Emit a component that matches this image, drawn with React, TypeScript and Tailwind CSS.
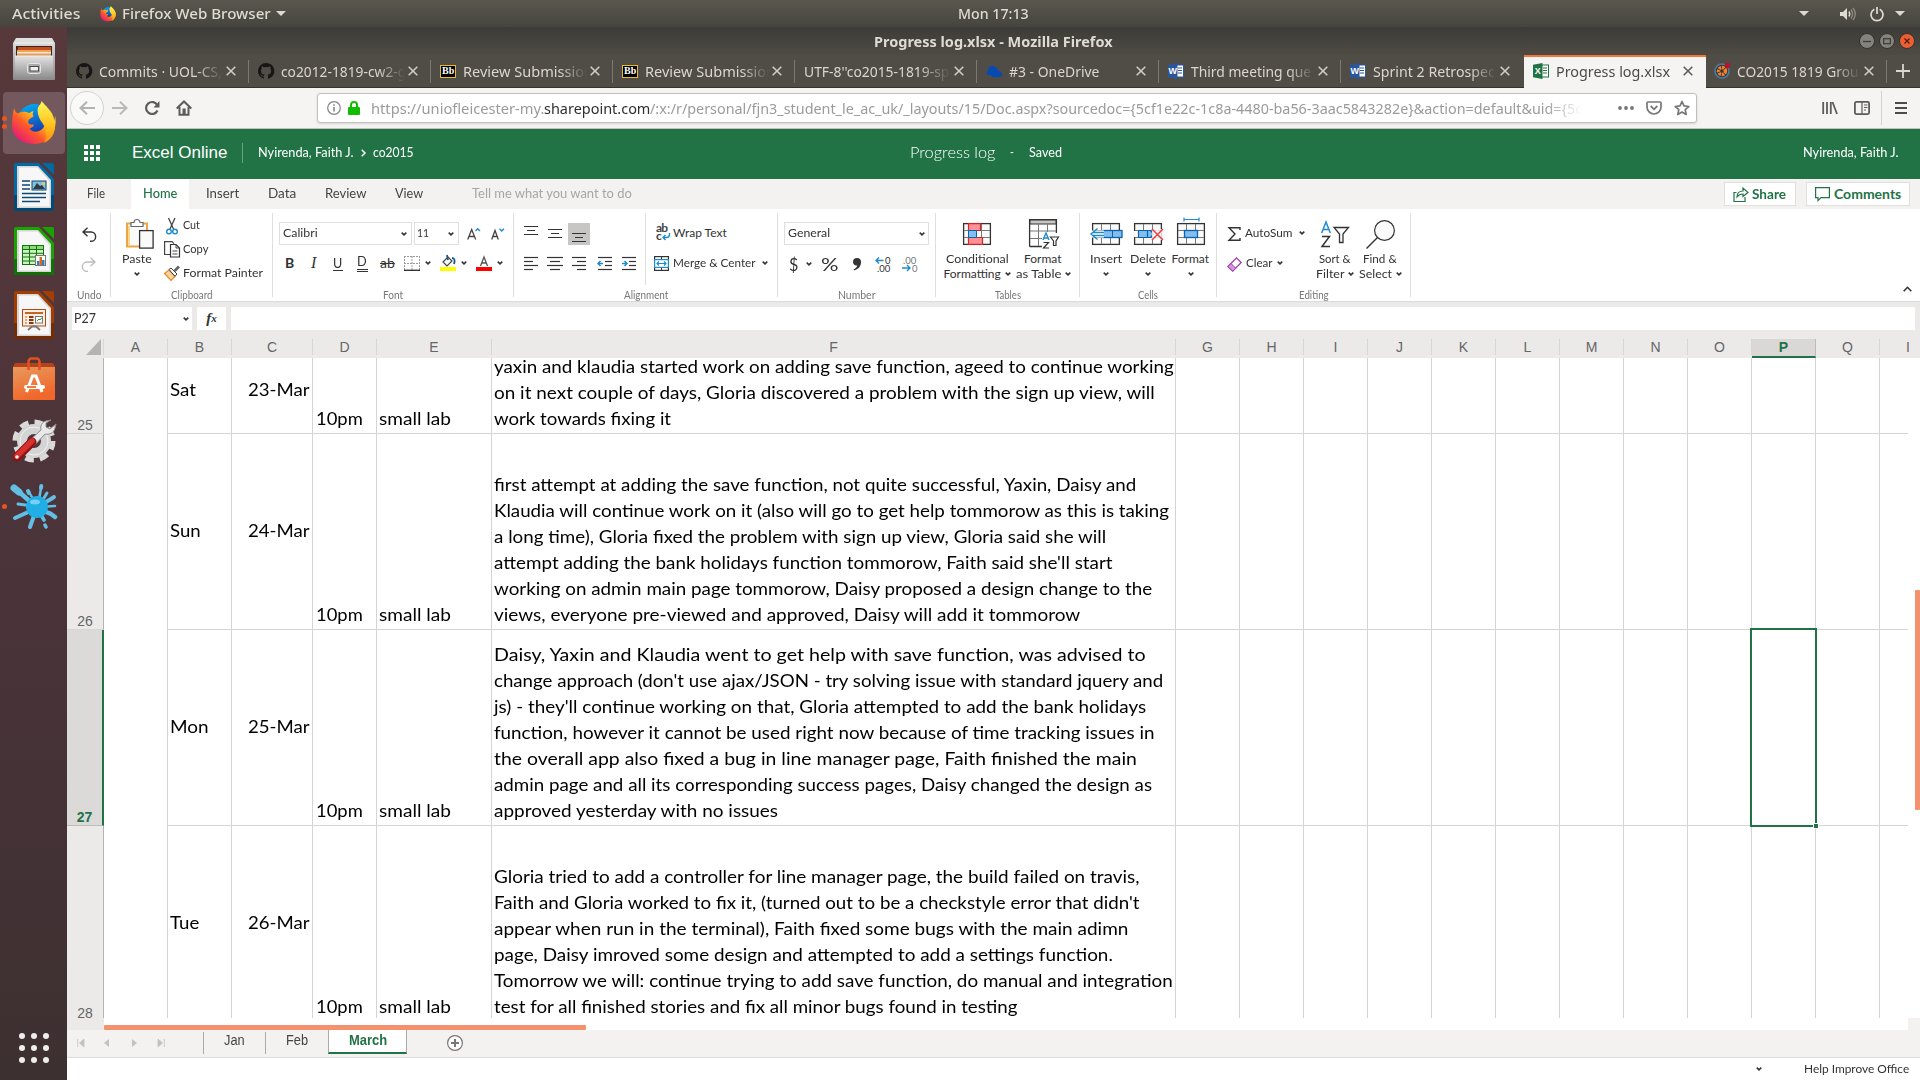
import React, { useLayoutEffect, useRef, useState } from "react";
import clsx from "clsx";

/* Text that is condensed or expanded to the width of its box. */
function T({ children, className }: { children: React.ReactNode; className?: string }) {
  const box = useRef<HTMLSpanElement>(null);
  const inner = useRef<HTMLSpanElement>(null);
  const [scale, setScale] = useState(1);
  useLayoutEffect(() => {
    const fit = () => {
      if (!box.current || !inner.current) return;
      const natural = inner.current.offsetWidth;
      if (natural > 0) setScale(box.current.offsetWidth / natural);
    };
    fit();
    document.fonts?.ready.then(fit);
  }, []);
  return (
    <span ref={box} className={clsx("inline-block shrink-0 whitespace-nowrap", className)}>
      <span ref={inner} className="inline-block origin-left" style={{ transform: `scaleX(${scale})` }}>
        {children}
      </span>
    </span>
  );
}

function Svg({ w, h, className, children }: { w: number; h: number; className?: string; children: React.ReactNode }) {
  return (
    <svg width={w} height={h} viewBox={`0 0 ${w} ${h}`} fill="none" className={clsx("shrink-0 overflow-visible", className)}>
      {children}
    </svg>
  );
}

const Caret = ({ className }: { className?: string }) => (
  <Svg w={6} h={4} className={className}>
    <path d="M.7 .6 3 2.9 5.3 .6" stroke="#333" strokeWidth="1.5" />
  </Svg>
);

/* ---------- desktop ---------- */

const FirefoxIcon = ({ size }: { size: number }) => (
  <svg width={size} height={size} viewBox="0 0 44 44" className="shrink-0">
    <defs>
      <linearGradient id="fxa" x1="0.9" y1="0.1" x2="0.1" y2="0.9">
        <stop offset="0" stopColor="#fff44f" />
        <stop offset=".35" stopColor="#ffb11b" />
        <stop offset=".6" stopColor="#ff5a2a" />
        <stop offset="1" stopColor="#e5137f" />
      </linearGradient>
      <linearGradient id="fxb" x1="0" y1="0" x2="0.3" y2="1">
        <stop offset="0" stopColor="#00b4f5" />
        <stop offset="1" stopColor="#1a2fa8" />
      </linearGradient>
      <linearGradient id="fxc" x1="0" y1="0" x2="0" y2="1">
        <stop offset="0" stopColor="#fff75a" />
        <stop offset=".6" stopColor="#ffbf1a" />
        <stop offset="1" stopColor="#ff8a16" />
      </linearGradient>
    </defs>
    <circle cx="23" cy="20" r="17" fill="url(#fxb)" />
    <path d="M3 7c1 2 1 4 4 5 4-2 8-2 11 0 2-2 3-2 4-2-1 2-1 4 0 5-2 2-6 3-5 6 0 2 3 2 5 2 1 2-2 3-4 4 2 3 6 4 10 2 5-2 7-8 4-14 5 1 8 5 9 8 2-4 2-7 2-9 3 16-6 28-20 28C8 42 0 33 1 22c0-6 1-11 2-15Z" fill="url(#fxa)" />
    <path d="M30 0c2 3 7 7 10 12 6 12 3 25-8 29 4-5 3-13-1-19-3-4-5-8-5-13 0-4 3-5 4-9Z" fill="url(#fxc)" />
  </svg>
);

const FilesIcon = () => (
  <Svg w={42} h={42}>
    <defs>
      <linearGradient id="fil" x1="0" y1="0" x2="0" y2="1">
        <stop offset="0" stopColor="#e3e3e3" />
        <stop offset="1" stopColor="#8b8b8b" />
      </linearGradient>
    </defs>
    <path d="M3 0h36l3 5v36a1 1 0 0 1-1 1H1a1 1 0 0 1-1-1V5Z" fill="url(#fil)" />
    <path d="M2 5h38" stroke="#f4f4f4" />
    <path d="M3 8h36v10H3Z" fill="#302722" />
    <path d="M5 9h33v9H4Z" fill="#cb4c1b" />
    <path d="M4 12h34v2H4Z" fill="#eca35a" />
    <path d="M4 14h34v4H4Z" fill="#f8ead6" />
    <path d="M4 15.500h34v2.500H4Z" fill="#e79b58" />
    <path d="M2 18h38v23H2Z" fill="url(#fil)" />
    <path d="M2 18h38" stroke="#eee" />
    <rect x="14.500" y="25.500" width="13" height="10" rx="2" fill="#aaa" stroke="#e5e5e5" />
    <rect x="17" y="28.500" width="8.500" height="4.500" fill="#efefef" stroke="#4a4a4a" />
  </Svg>
);

const DocIcon = ({ main, dark, kind }: { main: string; dark: string; kind: "w" | "c" | "i" }) => (
  <Svg w={40} h={48}>
    <path d="M2 0h23l15 16v30a2 2 0 0 1-2 2H2a2 2 0 0 1-2-2V2a2 2 0 0 1 2-2Z" fill={main} />
    <path d="M0 32h40v14a2 2 0 0 1-2 2H2a2 2 0 0 1-2-2Z" fill={dark} opacity=".7" />
    <path d="M28 0h10a2 2 0 0 1 2 2v10Z" fill={main} />
    <path d="M3 3h21l13 14v28H3Z" fill="#d5d5d5" />
    <path d="M5 4.500h18.500L35.500 18v25.500H5Z" fill="#f7f7f7" />
    {kind === "w" && (
      <>
        <path d="M8 18h8M8 22h8M8 26h8M8 30.500h24M8 34.500h24M8 38.500h18" stroke="#0d4a73" strokeWidth="1.700" />
        <rect x="18" y="18" width="14" height="9" fill="#83c0e2" stroke="#0d4a73" />
        <path d="m19 26 4-6 3 3 2-1 3 4Z" fill="#303b42" />
        <circle cx="29.500" cy="20.500" r="1.500" fill="#f6c951" />
      </>
    )}
    {kind === "c" && (
      <>
        <rect x="8.500" y="18.500" width="21" height="19" fill="#ccf4c2" stroke="#12740b" />
        <path d="M9 19h20v3H9Z" fill="#8bdb78" />
        <path d="M8 22.500h22M8 26.300h22M8 30h22M8 34h22M15.500 18v20M22.500 18v20" stroke="#12740b" />
        <rect x="21.500" y="28.500" width="10" height="10" fill="#fff" stroke="#777" />
        <path d="M23 34h2.500v4H23Z" fill="#2c7fc4" />
        <path d="M25.500 30H28v8h-2.500Z" fill="#e3641c" />
        <path d="M28 33h2.500v5H28Z" fill="#2c7fc4" />
      </>
    )}
    {kind === "i" && (
      <>
        <rect x="8.500" y="18.500" width="23" height="16.500" fill="#fdeee5" stroke="#b04b12" />
        <path d="M11 22h18" stroke="#c9641f" strokeWidth="2" />
        <path d="M11 26h2M11 29h2M11 32h2" stroke="#e2a87e" strokeWidth="2" />
        <path d="M15 26h4.500M15 29h4.500M15 32h4.500" stroke="#8c350a" strokeWidth="2" />
        <rect x="21.500" y="25.500" width="7" height="6.500" fill="#fff" stroke="#777" />
        <path d="m23 30 2-2 1 1 2-2.500" stroke="#28a428" />
        <path d="m14 39 4-3.500h4l4 3.500" stroke="#777" strokeWidth="1.800" />
      </>
    )}
  </Svg>
);

const SoftwareIcon = () => (
  <Svg w={42} h={43}>
    <defs>
      <linearGradient id="sw" x1="0" y1="0" x2=".4" y2="1">
        <stop offset="0" stopColor="#e89a5e" />
        <stop offset="1" stopColor="#f1662a" />
      </linearGradient>
    </defs>
    <path d="M0 10 2 6h38l2 4Z" fill="#b4421b" />
    <path d="M0 10h42v32a1 1 0 0 1-1 1H1a1 1 0 0 1-1-1Z" fill="url(#sw)" />
    <path d="M15.500 13V4.500a3 3 0 0 1 3-3h5a3 3 0 0 1 3 3V13" stroke="#e0521f" strokeWidth="2.500" />
    <path d="m13.500 35 6-16h3.500l6 16" stroke="#fff" strokeWidth="3" />
    <path d="M13 30h17" stroke="#fff" strokeWidth="4" strokeLinecap="round" />
    <path d="M14 30h9" stroke="#ed6c2c" strokeWidth="1.800" />
  </Svg>
);

const SettingsIcon = () => (
  <Svg w={44} h={44}>
    <circle cx="22" cy="22" r="18.500" stroke="#dadada" strokeWidth="6" strokeDasharray="8.500 6.030" />
    <circle cx="22" cy="22" r="12" stroke="#d4d4d4" strokeWidth="10" />
    <circle cx="22" cy="22" r="14" stroke="#f1f1f1" strokeWidth="1" />
    <path d="M34 2c-4 1-6 5-5 9L17 22l5 5 11-12c4 1 9-1 10-6l1-4-6 5-4-2v-4l5-3Z" fill="#e9e9e9" stroke="#8c8c8c" />
    <path d="M5 38 20 23" stroke="#8f1414" strokeWidth="9" strokeLinecap="round" />
    <path d="M5 37 20 22" stroke="#d5322f" strokeWidth="5.500" strokeLinecap="round" />
    <circle cx="5" cy="38" r="1.800" fill="#eee" />
  </Svg>
);

const SplatIcon = () => (
  <Svg w={46} h={46}>
    <g stroke="#62bfe3" strokeLinecap="round">
      <path d="M8 8 3 4" strokeWidth="7" />
      <path d="M24 22 6 6" strokeWidth="4.500" />
      <path d="M26 22 18 8" strokeWidth="2.500" />
      <path d="m18 9-1-2" strokeWidth="4" />
      <path d="M27 22 30 4" strokeWidth="2.500" />
      <path d="m30 4 .3-2" strokeWidth="4" />
      <path d="m28 22 8-13" strokeWidth="3" />
      <path d="m28 22 12-7M40 15l3-2" strokeWidth="4" />
      <path d="m28 23 16-1" strokeWidth="2.500" />
      <path d="m28 25 12 5M40 30l4 3" strokeWidth="4.500" />
      <path d="m27 26 6 10M34 41l1 2" strokeWidth="3.500" />
      <path d="M25 26 19 43" strokeWidth="4" />
      <path d="M24 25 4 34" strokeWidth="4" />
      <path d="M22 22 7 20" strokeWidth="3" />
    </g>
    <circle cx="26" cy="23" r="11" fill="#21aee6" />
    <ellipse cx="24" cy="18" rx="5" ry="2.500" fill="#9be0f8" opacity=".7" />
  </Svg>
);

function Dock() {
  return (
    <aside className="relative flex h-[1053px] w-[67px] shrink-0 flex-col items-center bg-linear-to-b from-[#57383b] via-[#4b343a] to-[#3d3031]">
      <div className="mt-[10px] flex h-[43px] items-center"><FilesIcon /></div>
      <div className="mt-[12px] flex h-[62px] w-[62px] items-center justify-center rounded-[4px] bg-[#73595d]">
        <FirefoxIcon size={45} />
      </div>
      <div className="mt-[9px] flex h-[48px]"><DocIcon main="#0369a3" dark="#063c60" kind="w" /></div>
      <div className="mt-[16px] flex h-[48px]"><DocIcon main="#18a303" dark="#0c5c0a" kind="c" /></div>
      <div className="mt-[16px] flex h-[48px]"><DocIcon main="#a33e03" dark="#5c2606" kind="i" /></div>
      <div className="mt-[18px] flex h-[43px]"><SoftwareIcon /></div>
      <div className="mt-[19px] flex h-[44px]"><SettingsIcon /></div>
      <div className="mt-[21px] flex h-[46px]"><SplatIcon /></div>
      <div className="mt-auto mb-[17px] grid grid-cols-3 gap-[6px]">
        {Array.from({ length: 9 }, (_, i) => (
          <i key={i} className="size-[6px] rounded-full bg-[#eeeeec]" />
        ))}
      </div>
      <i className="absolute top-[89px] left-[2px] size-[5px] rounded-full bg-[#e95420]" />
      <i className="absolute top-[97px] left-[2px] size-[5px] rounded-full bg-[#e95420]" />
      <i className="absolute top-[477px] left-[2px] size-[5px] rounded-full bg-[#e95420]" />
    </aside>
  );
}

const Down = ({ className }: { className?: string }) => (
  <Svg w={10} h={5} className={className}><path d="M0 0h10L5 5Z" fill="#dbd9d4" /></Svg>
);

function TopBar() {
  return (
    <header className="flex h-[27px] items-center bg-linear-to-b from-[#5a574e] to-[#45443e] font-['Noto_Sans'] text-[14px] font-medium text-[#dfdbd2]">
      <T className="ml-[12px] w-[68px]">Activities</T>
      <span className="mr-[6px] ml-[20px]"><FirefoxIcon size={16} /></span>
      <T className="w-[149px]">Firefox Web Browser</T>
      <Down className="ml-[5px]" />
      <T className="ml-[672px] w-[71px]">Mon 17:13</T>
      <Down className="ml-[770px]" />
      <Svg w={16} h={14} className="ml-[31px]">
        <path d="M0 5h3l4-4v12L3 9H0Z" fill="#dfdbd2" />
        <path d="M9 4.500q1.500 2.500 0 5" stroke="#dfdbd2" strokeWidth="1.500" />
        <path d="M11 2.500q3 4.500 0 9M13 1q4.500 6 0 12" stroke="#8b8880" strokeWidth="1.400" />
      </Svg>
      <Svg w={14} h={14} className="ml-[14px]">
        <path d="M4.300 2.300a6 6 0 1 0 5.400 0M7 0v7" stroke="#dfdbd2" strokeWidth="1.700" />
      </Svg>
      <Down className="ml-[11px]" />
    </header>
  );
}

/* ---------- browser ---------- */

const GitHubIcon = () => (
  <Svg w={16} h={16}>
    <path fill="#171515" d="M8 0a8 8 0 0 0-2.530 15.590c.4.070.55-.17.55-.38v-1.490c-2.010.44-2.690-.85-2.690-.85-.36-.94-.88-1.190-.88-1.190-.73-.5.050-.49.050-.49.810.060 1.230.83 1.230.83.720 1.240 1.890.88 2.350.67.070-.52.280-.88.510-1.080-1.780-.2-3.640-.89-3.640-3.950 0-.87.310-1.590.82-2.150-.08-.2-.36-1.020.08-2.120 0 0 .67-.21 2.200.82a7.600 7.600 0 0 1 4 0c1.530-1.040 2.200-.82 2.200-.82.440 1.100.160 1.920.080 2.120.510.560.820 1.270.820 2.150 0 3.070-1.870 3.750-3.650 3.950.290.250.540.730.540 1.480v2.200c0 .210.150.460.550.380A8 8 0 0 0 8 0Z" />
  </Svg>
);
const BbIcon = () => (
  <span className="flex h-[13px] w-[16px] shrink-0 items-center justify-center border border-[#e8b92c] bg-black font-['Liberation_Serif'] text-[10px] font-bold leading-none text-white">
    <T className="w-[12px]">Bb</T>
  </span>
);
const OneDriveIcon = () => (
  <Svg w={17} h={12}>
    <path d="M5 10H2a2.500 2.500 0 0 1 0-4.500A4.500 4.500 0 0 1 10 2.500a3 3 0 0 1 2 .5L7 6Z" fill="#094ab2" />
    <path d="M6.500 12a2.700 2.700 0 0 1 0-5 3.700 3.700 0 0 1 7-.5A2.800 2.800 0 0 1 14 12Z" fill="#094ab2" />
  </Svg>
);
const OfficeIcon = ({ color, letter }: { color: string; letter: string }) => (
  <Svg w={16} h={16}>
    <rect x="8" y="2" width="7.500" height="12" fill="#fff" stroke={color} />
    <path d="M10 5h4M10 7.500h4M10 10h4" stroke={color} strokeWidth="1.200" />
    <path d="M0 1.800 9.500 0v16L0 14.200Z" fill={color} />
    <text x="4.800" y="11.300" textAnchor="middle" fontSize="9" fontWeight="700" fill="#fff" fontFamily="Liberation Sans">{letter}</text>
  </Svg>
);
const CourseIcon = () => (
  <Svg w={16} h={16}>
    <circle cx="8" cy="8" r="7" fill="#3b3535" stroke="#4a7da3" strokeWidth="1.600" />
    <circle cx="8" cy="8" r="3.500" stroke="#ef8132" strokeWidth="3.500" strokeDasharray="2.400 .8" />
    <circle cx="13.500" cy="2.500" r="2.700" fill="#b8142b" />
  </Svg>
);

const tabs = [
  { icon: <GitHubIcon />, title: "Commits · UOL-CS,", w: "w-[123px]" },
  { icon: <GitHubIcon />, title: "co2012-1819-cw2-g", w: "w-[125px]" },
  { icon: <BbIcon />, title: "Review Submission", w: "w-[130px]" },
  { icon: <BbIcon />, title: "Review Submission", w: "w-[130px]" },
  { icon: null, title: "UTF-8''co2015-1819-sp", w: "w-[145px]" },
  { icon: <OneDriveIcon />, title: "#3 - OneDrive", w: "w-[90px]" },
  { icon: <OfficeIcon color="#2b579a" letter="W" />, title: "Third meeting que", w: "w-[120px]" },
  { icon: <OfficeIcon color="#2b579a" letter="W" />, title: "Sprint 2 Retrospec", w: "w-[122px]" },
  { icon: <OfficeIcon color="#217346" letter="X" />, title: "Progress log.xlsx", w: "w-[114px]", active: true },
  { icon: <CourseIcon />, title: "CO2015 1819 Grou", w: "w-[122px]" },
];

function BrowserChrome() {
  return (
    <div className="font-['Noto_Sans']">
      <div className="flex h-[28px] items-center bg-linear-to-b from-[#3c3b37] to-[#4e4b44] text-[14px] font-bold text-[#dfdbd2]">
        <T className="ml-[807px] w-[239px]">Progress log.xlsx - Mozilla Firefox</T>
        <div className="mr-[5px] ml-auto flex gap-[4px]">
          <Svg w={16} h={16}><circle cx="8" cy="8" r="7.500" fill="#85827b" stroke="#33322f" /><path d="M4 8.500h8" stroke="#3c3b37" strokeWidth="1.300" /></Svg>
          <Svg w={16} h={16}><circle cx="8" cy="8" r="7.500" fill="#85827b" stroke="#33322f" /><rect x="4.700" y="5.700" width="6.600" height="5" stroke="#3c3b37" strokeWidth="1.200" /></Svg>
          <Svg w={16} h={16}><circle cx="8" cy="8" r="7.500" fill="#ee5e33" stroke="#33322f" /><path d="m5.500 5.500 5 5m0-5-5 5" stroke="#4a2013" strokeWidth="1.300" /></Svg>
        </div>
      </div>
      <div className="flex h-[33px] items-stretch border-b border-[#33322e] bg-[#504d46] text-[15px]">
        {tabs.map((t, i) => (
          <div
            key={i}
            className={clsx(
              "flex w-[182px] shrink-0 items-center pl-[9px]",
              t.active ? "mb-[-1px] translate-x-px border-t-2 border-[#f4743b] bg-[#f5f4f2] pb-[3px] text-[#4a4a48]" : "text-[#dbd7ce]",
            )}
          >
            {t.icon && <span className="mr-[7px] flex w-[16px] shrink-0">{t.icon}</span>}
            <span className={clsx("flex min-w-0 flex-1 overflow-hidden", !t.active && t.w !== "w-[90px]" && "[mask-image:linear-gradient(to_right,#000_78%,transparent)]")}>
              <T className={t.w}>{t.title}</T>
            </span>
            <Svg w={10} h={10} className="mr-[12px] ml-[3px]">
              <path d="m.7 .7 8.600 8.600m0-8.600L.7 9.300" stroke={t.active ? "#5c5c5a" : "#d0ccc3"} strokeWidth="1.600" />
            </Svg>
            <i className={clsx("h-[23px] w-px", t.active || i === 7 ? "" : "bg-[#7b7972]")} />
          </div>
        ))}
        <Svg w={14} h={14} className="ml-[9px] self-center"><path d="M7 0v14M0 7h14" stroke="#dbd7ce" strokeWidth="1.800" /></Svg>
      </div>
      <div className="flex h-[41px] items-center border-b border-[#c6c3bf] bg-[#f5f4f2]">
        <span className="ml-[3px] flex size-[34px] items-center justify-center rounded-full border border-[#d4d2cf] bg-[#f9f9f8]">
          <Svg w={16} h={14}><path d="M16 7H1.500M8 .8 1.500 7 8 13.200" stroke="#b5b3b0" strokeWidth="2" /></Svg>
        </span>
        <Svg w={16} h={14} className="ml-[8px]"><path d="M0 7h14.500M8 .8 14.500 7 8 13.200" stroke="#bbb9b6" strokeWidth="2" /></Svg>
        <Svg w={15} h={14} className="ml-[17px]">
          <path d="M12.500 9.500a6 6 0 1 1 0-5" stroke="#5c5c5a" strokeWidth="2.200" />
          <path d="M14.500 0v6.500H8.500Z" fill="#5c5c5a" />
        </Svg>
        <Svg w={16} h={16} className="ml-[16px]">
          <path d="M.7 8.500 8 1.500l7.300 7M3.500 7v7.700h9V7" stroke="#5c5c5a" strokeWidth="2" />
          <path d="M6.500 8.500h3.200V15H6.500Z" fill="#5c5c5a" />
        </Svg>
        <div className="ml-[125px] flex h-[30px] w-[1380px] items-center rounded-[3px] border border-[#c2c0bd] bg-white text-[15px] text-[#9b9b9b] shadow-sm">
          <Svg w={14} h={14} className="ml-[9px]">
            <circle cx="7" cy="7" r="6.300" stroke="#858585" strokeWidth="1.200" />
            <path d="M7 6v4.500M7 3.300v1.500" stroke="#858585" strokeWidth="1.600" />
          </Svg>
          <Svg w={12} h={14} className="ml-[7px]">
            <path d="M3 7V4a3 3 0 0 1 6 0v3" stroke="#12bc00" strokeWidth="2" />
            <rect y="6" width="12" height="8" rx="1" fill="#12bc00" />
          </Svg>
          <span className="ml-[11px] flex w-[1211px] overflow-hidden [mask-image:linear-gradient(to_right,#000_97%,transparent)]">
            <T className="w-[173px]">https://uniofleicester-my.</T>
            <T className="w-[106px] text-[#2e2e2e]">sharepoint.com</T>
            <T className="w-[932px]">/:x:/r/personal/fjn3_student_le_ac_uk/_layouts/15/Doc.aspx?sourcedoc={"{"}5cf1e22c-1c8a-4480-ba56-3aac5843282e{"}"}&amp;action=default&amp;uid={"{"}5c</T>
          </span>
          <Svg w={16} h={4} className="ml-[36px]">
            <circle cx="2" cy="2" r="1.900" fill="#777" /><circle cx="8" cy="2" r="1.900" fill="#777" /><circle cx="14" cy="2" r="1.900" fill="#777" />
          </Svg>
          <Svg w={16} h={14} className="ml-[12px]">
            <path d="M2 1h12a1 1 0 0 1 1 1v4a7 7 0 0 1-14 0V2a1 1 0 0 1 1-1Z" stroke="#777" strokeWidth="1.700" />
            <path d="m4.700 5 3.300 3.300L11.300 5" stroke="#777" strokeWidth="1.800" />
          </Svg>
          <Svg w={16} h={16} className="ml-[12px]">
            <path d="m8 1.500 2 4.400 4.800.6-3.600 3.200 1 4.800L8 12.100l-4.200 2.400 1-4.800L1.200 6.500l4.800-.6Z" stroke="#777" strokeWidth="1.700" strokeLinejoin="round" />
          </Svg>
        </div>
        <Svg w={16} h={14} className="ml-[125px]"><path d="M1.200 1v12M5 1v12M8.800 1v12M10.500 1 15 13" stroke="#5c5c5a" strokeWidth="1.800" /></Svg>
        <Svg w={16} h={14} className="ml-[16px]">
          <rect x=".9" y=".9" width="14.200" height="12.200" rx="1.500" stroke="#5c5c5a" strokeWidth="1.800" />
          <path d="M8 1v12M10 4h3.500M10 6.500h3.500M10 9h2" stroke="#5c5c5a" strokeWidth="1.200" />
        </Svg>
        <i className="ml-[11px] h-[34px] w-px bg-[#d5d3d0]" />
        <Svg w={12} h={12} className="ml-[13px]"><path d="M0 1h12M0 6h12M0 11h12" stroke="#4c4c4a" strokeWidth="2" /></Svg>
      </div>
    </div>
  );
}

/* ---------- Excel ---------- */

function SuiteHeader() {
  return (
    <div className="flex h-[50px] items-center bg-[#217346] pb-[2px] font-['Lato'] text-[13px] text-white">
      <span className="ml-[17px] grid grid-cols-3 gap-[2px]">
        {Array.from({ length: 9 }, (_, i) => <i key={i} className="size-[4px] bg-white" />)}
      </span>
      <T className="ml-[32px] w-[95px] font-['Liberation_Sans'] text-[17px]">Excel Online</T>
      <i className="ml-[15px] h-[20px] w-px bg-[#64a27d]" />
      <T className="ml-[15px] w-[96px]">Nyirenda, Faith J.</T>
      <Svg w={5} h={8} className="ml-[7px]"><path d="m.7 .7 3.300 3.300L.7 7.300" stroke="#fff" strokeWidth="1.500" /></Svg>
      <T className="ml-[7px] w-[41px]">co2015</T>
      <T className="ml-[496px] w-[85px] pb-[2px] text-[16px] font-light">Progress log</T>
      <T className="ml-[15px] w-[4px]">-</T>
      <T className="ml-[15px] w-[33px]">Saved</T>
      <T className="ml-[741px] w-[96px]">Nyirenda, Faith J.</T>
    </div>
  );
}

function RibbonTabs() {
  return (
    <div className="flex h-[30px] items-center bg-[#f3f2f1] font-['Lato'] text-[14px] text-[#444]">
      <T className="ml-[20px] w-[18px] pb-[3px]">File</T>
      <span className="ml-[26px] flex h-full w-[58px] items-center justify-center bg-white text-[#217346]"><T className="w-[34px] pb-[3px] font-medium">Home</T></span>
      <T className="ml-[17px] w-[33px] pb-[3px]">Insert</T>
      <T className="ml-[29px] w-[28px] pb-[3px]">Data</T>
      <T className="ml-[29px] w-[41px] pb-[3px]">Review</T>
      <T className="ml-[29px] w-[28px] pb-[3px]">View</T>
      <T className="ml-[49px] w-[160px] pb-[3px] text-[#a6a6a6]">Tell me what you want to do</T>
      <span className="ml-[1092px] flex h-[24px] w-[72px] items-center border border-[#e1dfdd] bg-white font-bold text-[#217346]">
        <Svg w={16} h={15} className="ml-[8px]">
          <path d="M3.500 5.500H1v9h11V10" stroke="#217346" strokeWidth="1.200" />
          <path d="M4 10c0-4 2.500-6 6-6V1l5 4.500L10 9.500V7c-3 0-4.500 1-6 3Z" stroke="#217346" strokeWidth="1.200" />
        </Svg>
        <T className="ml-[3px] w-[34px] pb-[2px]">Share</T>
      </span>
      <span className="ml-[10px] flex h-[24px] w-[104px] items-center border border-[#e1dfdd] bg-white font-bold text-[#217346]">
        <Svg w={15} h={14} className="ml-[8px]"><path d="M.6 .6h13.800v10H6l-3 3v-3H.6Z" stroke="#217346" strokeWidth="1.200" /></Svg>
        <T className="ml-[4px] w-[67px] pb-[2px]">Comments</T>
      </span>
    </div>
  );
}

function Group({ label, labelW, className, children }: { label: string; labelW: string; className: string; children: React.ReactNode }) {
  return (
    <div className={clsx("my-[4px] flex h-[84px] shrink-0 flex-col border-r border-[#e1dfdd]", className)}>
      <div className="flex h-[74px] min-h-0 shrink-0 items-start">{children}</div>
      <div className="flex h-[14px] shrink-0 items-center justify-center text-[11px] leading-none text-[#777]"><T className={labelW}>{label}</T></div>
    </div>
  );
}

/* A tall ribbon button: an icon over two lines of label. */
function Tall({ icon, a, aw, b, bw, className }: { icon: React.ReactNode; a: string; aw: string; b?: string; bw?: string; className: string }) {
  return (
    <div className={clsx("flex shrink-0 flex-col items-center", className)}>
      <span className="flex h-[38px] items-center pt-[4px]">{icon}</span>
      <span className="flex h-[15px] items-center"><T className={aw}>{a}</T></span>
      <span className="flex h-[15px] items-center">
        {b && <T className={clsx("mr-[4px]", bw)}>{b}</T>}
        <Caret />
      </span>
    </div>
  );
}

const Lines = ({ w, rows, d = "" }: { w: number; rows: [number, number][]; d?: string }) => (
  <Svg w={w} h={14}>
    {rows.map(([x, len], i) => (
      <path key={i} d={`M${x} ${i * 4 + 0.5}h${len}`} stroke="#333" strokeWidth="1.200" />
    ))}
    {d && <path d={d} stroke="#1e8bcd" strokeWidth="1.500" />}
  </Svg>
);

const GridBase = () => (
  <>
    <rect x=".6" y=".6" width="26.800" height="20.800" fill="#fafafa" stroke="#333" strokeWidth="1.300" />
    <path d="M1 7.500h26M1 14.500h26M9.500 1v20M18.500 1v20" stroke="#777" />
  </>
);

function Ribbon() {
  return (
    <div className="flex h-[93px] border-b border-[#dcdad8] bg-white font-['Lato'] text-[12px] text-[#333]">
      <Group label="Undo" labelW="w-[24px]" className="w-[44px]">
        <div className="ml-[15px] flex flex-col gap-[15px] pt-[14px]">
          <Svg w={14} h={15}><path d="M5.500 .7 1 5l4.500 4.300M1 5h8a4.500 4.500 0 0 1 0 9.300H8" stroke="#333" strokeWidth="1.400" /></Svg>
          <Svg w={14} h={15}><path d="M8.500 .7 13 5 8.500 9.300M13 5H5a4.500 4.500 0 0 0 0 9.300h1" stroke="#bbb" strokeWidth="1.300" /></Svg>
        </div>
      </Group>

      <Group label="Clipboard" labelW="w-[42px]" className="w-[162px]">
        <Tall
          className="ml-[9px] w-[33px]"
          a="Paste"
          aw="w-[30px]"
          icon={
            <Svg w={28} h={30} className="ml-[6px]">
              <rect x="1" y="4.500" width="20" height="23" fill="#fafafa" stroke="#eda446" strokeWidth="2" />
              <path d="M3 7v19.500" stroke="#fbd98a" strokeWidth="2" />
              <path d="M5 7.500V3.500h3a3 3 0 0 1 6 0h3v4Z" fill="#fff" stroke="#666" strokeWidth="1.200" />
              <rect x="13.600" y="11.600" width="13.500" height="17.500" fill="#fafafa" stroke="#333" strokeWidth="1.300" />
            </Svg>
          }
        />
        <div className="ml-[11px] flex flex-col">
          <div className="flex h-[24px] items-center">
            <Svg w={16} h={17} className="mt-[2px]">
              <path d="m4.500 0 5 11M11 0 6 11" stroke="#444" strokeWidth="1.300" />
              <circle cx="5" cy="13.500" r="2.300" stroke="#1e8bcd" strokeWidth="1.400" /><circle cx="11" cy="13.500" r="2.300" stroke="#1e8bcd" strokeWidth="1.400" />
            </Svg>
            <T className="ml-[3px] w-[17px]">Cut</T>
          </div>
          <div className="flex h-[24px] items-center">
            <Svg w={16} h={17}>
              <path d="M6 13.500H.6V.6H8l2 2" stroke="#444" strokeWidth="1.200" />
              <path d="M6.500 3.500h5.500l3.500 3.500v9h-9Z" fill="#fff" stroke="#333" strokeWidth="1.200" /><path d="M8.500 10h5M8.500 13h5M12 4v3h3" stroke="#444" />
            </Svg>
            <T className="ml-[3px] w-[25px]">Copy</T>
          </div>
          <div className="flex h-[24px] items-center">
            <Svg w={16} h={16}>
              <path d="M.5 8.500 5 5l6 6.500L7 15.500Z" fill="#fbd49a" stroke="#e48a2b" strokeWidth="1.200" />
              <path d="m5 4.500 2-1.500L13 9l-2 2.300Z" fill="#fff" stroke="#444" />
              <path d="m9.500 5 4.500-4.500 2 2L11.500 7Z" fill="#666" />
            </Svg>
            <T className="ml-[3px] w-[80px]">Format Painter</T>
          </div>
        </div>
      </Group>

      <Group label="Font" labelW="w-[20px]" className="w-[241px]">
        <div className="ml-[6px] flex flex-col pt-[9px]">
          <div className="flex h-[23px] w-[230px] items-center">
            <span className="flex h-[23px] w-[133px] items-center border border-[#e1dfdd] pr-[4px] pl-[3px]"><T className="w-[35px] pb-px">Calibri</T><Caret className="ml-auto" /></span>
            <span className="ml-[2px] flex h-[23px] w-[45px] items-center border border-[#e1dfdd] pr-[4px] pl-[2px]"><T className="w-[12px] pb-px">11</T><Caret className="ml-auto" /></span>
            <Svg w={14} h={12} className="ml-[8px]"><path d="M.7 11.500 4.700 1.500l4 10M2 8.500h5.400" stroke="#444" strokeWidth="1.300" /><path d="m8.500 3 2.200-2.200L13 3" stroke="#1e8bcd" strokeWidth="1.400" /></Svg>
            <Svg w={14} h={12} className="ml-[10px]"><path d="m.7 11.500 3.300-9 3.300 9M2 8.500h4" stroke="#444" strokeWidth="1.300" /><path d="m8.500 .8 2.200 2.200L13 .8" stroke="#1e8bcd" strokeWidth="1.400" /></Svg>
          </div>
          <div className="mt-[7px] flex h-[22px] items-center text-[15px] leading-none">
            <b className="ml-[6px] w-[11px] text-[14px] text-[#333]">B</b>
            <i className="ml-[15px] w-[9px] font-['Liberation_Serif'] text-[16px]">I</i>
            <span className="ml-[13px] w-[10px] border-b border-[#333] text-[14px] leading-[14px]"><T className="w-[9px]">U</T></span>
            <span className="ml-[14px] h-[18px] w-[11px] border-b-3 border-double border-[#333] text-[14px] leading-[14px]"><T className="w-[10px]">D</T></span>
            <T className="ml-[12px] w-[15px] text-[14px]"><span className="line-through">ab</span></T>
            <Svg w={16} h={15} className="ml-[9px]"><path d="M.5 0v14M8 0v14M15.500 0v14M0 .5h16M0 7.500h16" stroke="#999" strokeDasharray="2 1" /><path d="M0 14.300h16" stroke="#333" strokeWidth="1.400" /></Svg>
            <Caret className="ml-[5px]" />
            <Svg w={16} h={16} className="ml-[9px]">
              <path d="m3 7 5-5 4 4-5 5Z" fill="#fff" stroke="#444" strokeWidth="1.200" /><path d="m8 5-1-5M12 3c3 0 3 3 2 6" stroke="#15588e" strokeWidth="1.800" />
              <path d="M0 12h16v4H0Z" fill="#ff0" />
            </Svg>
            <Caret className="ml-[5px]" />
            <Svg w={16} h={16} className="ml-[9px]"><path d="m4.500 11 3.500-9 3.500 9M5.600 8h5" stroke="#555" strokeWidth="1.300" /><path d="M0 12h16v4H0Z" fill="#f00" /></Svg>
            <Caret className="ml-[5px]" />
          </div>
        </div>
      </Group>

      <Group label="Alignment" labelW="w-[44px]" className="w-[264px]">
        <div className="ml-[10px] flex w-[122px] flex-col border-r border-[#e1dfdd] pt-[10px]">
          <div className="flex h-[22px] items-center">
            <Svg w={14} h={22}><path d="M0 3.500h14M3 7.500h8M0 11.500h14" stroke="#333" strokeWidth="1.200" /></Svg>
            <Svg w={14} h={22} className="ml-[10px]"><path d="M0 6.500h14M3 10.500h8M0 14.500h14" stroke="#333" strokeWidth="1.200" /></Svg>
            <span className="ml-[6px] flex size-[22px] items-center justify-center bg-[#c8c6c4]"><Svg w={14} h={22}><path d="M0 10.500h14M3 14.500h8M0 18.500h14" stroke="#333" strokeWidth="1.200" /></Svg></span>
          </div>
          <div className="mt-[12px] flex h-[14px] items-center">
            <Lines w={14} rows={[[0, 14], [0, 9], [0, 14], [0, 9]]} />
            <span className="ml-[9px] flex"><Lines w={16} rows={[[0, 16], [3, 10], [0, 16], [3, 10]]} /></span>
            <span className="ml-[9px] flex"><Lines w={14} rows={[[0, 14], [5, 9], [0, 14], [5, 9]]} /></span>
            <span className="ml-[12px] flex"><Lines w={14} rows={[[0, 14], [7, 7], [7, 7], [0, 14]]} d="M5 6.500H0M2.500 4 0 6.500 2.500 9" /></span>
            <span className="ml-[10px] flex"><Lines w={14} rows={[[0, 14], [7, 7], [7, 7], [0, 14]]} d="M0 6.500h5M2.500 4 5 6.500 2.500 9" /></span>
          </div>
          <div className="h-[14px]" />
        </div>
        <div className="ml-[8px] flex flex-col">
          <div className="mt-[9px] flex h-[22px] items-center">
            <Svg w={15} h={18} className="ml-[2px]">
              <text x="0" y="8" fontSize="12" fontWeight="700" fontFamily="Lato" fill="#444" textLength="12">ab</text>
              <text x="0" y="16" fontSize="12" fontWeight="700" fontFamily="Lato" fill="#444">c</text>
              <path d="M13.500 9v1.500a3 3 0 0 1-3 3H7M9.500 11 7 13.500 9.500 16" stroke="#1e8bcd" strokeWidth="1.400" />
            </Svg>
            <T className="ml-[2px] w-[54px]">Wrap Text</T>
          </div>
          <div className="mt-[8px] flex h-[22px] items-center">
            <Svg w={15} h={15} className="mt-px">
              <rect x=".6" y=".6" width="13.800" height="13.800" stroke="#333" strokeWidth="1.200" /><path d="M7.500 0v4M7.500 11v4" stroke="#333" />
              <rect x=".6" y="3.600" width="13.800" height="7.800" fill="#fff" stroke="#1e8bcd" strokeWidth="1.200" /><path d="M3 7.500h9M5 5.500l-2 2 2 2m5-4 2 2-2 2" stroke="#1e8bcd" strokeWidth="1.200" />
            </Svg>
            <T className="ml-[4px] w-[83px]">Merge &amp; Center</T>
            <Caret className="ml-[6px]" />
          </div>
        </div>
      </Group>

      <Group label="Number" labelW="w-[37px]" className="w-[158px]">
        <div className="ml-[6px] flex flex-col pt-[9px]">
          <span className="flex h-[23px] w-[145px] items-center border border-[#e1dfdd] pr-[3px] pl-[3px]"><T className="w-[42px] pb-px">General</T><Caret className="ml-auto" /></span>
          <div className="mt-[8px] flex h-[22px] items-center text-[18px] leading-none">
            <T className="ml-[5px] w-[9px]">$</T>
            <Caret className="ml-[8px]" />
            <T className="ml-[9px] w-[17px]">%</T>
            <Svg w={8} h={13} className="ml-[15px]"><path d="M4 0a4 4 0 0 1 4 4c0 4-2 7-7 8.500l-.3-1C3 10 4 9 4.300 7.500 2 8 0 6.500 0 4a4 4 0 0 1 4-4Z" fill="#333" /></Svg>
            <Svg w={16} h={16} className="ml-[14px]">
              <text x="10" y="7.500" fontSize="9.500" fontFamily="Lato" fill="#333">0</text><text x="2" y="15.500" fontSize="9.500" fontFamily="Lato" fill="#333">.00</text>
              <path d="M8.500 4.500H1M4 1.500l-3 3 3 3" stroke="#1e8bcd" strokeWidth="1.400" />
            </Svg>
            <Svg w={16} h={16} className="ml-[11px]">
              <text x="1" y="7.500" fontSize="9.500" fontFamily="Lato" fill="#777">.00</text><text x="10" y="15.500" fontSize="9.500" fontFamily="Lato" fill="#777">0</text>
              <path d="M0 12h8M5 9l3 3-3 3" stroke="#1e8bcd" strokeWidth="1.400" />
            </Svg>
          </div>
        </div>
      </Group>

      <Group label="Tables" labelW="w-[26px]" className="w-[144px]">
        <Tall
          className="ml-[6px] w-[70px]"
          a="Conditional" aw="w-[63px]" b="Formatting" bw="w-[57px]"
          icon={
            <Svg w={28} h={22}>
              <GridBase />
              <path d="M5.500 .7h12v6.800h-12ZM5.500 14.500h14v6.800h-14Z" fill="#ff9298" stroke="#d92323" strokeWidth="1.200" />
              <path d="M5.500 7.500h8v7h-8Z" fill="#83beec" stroke="#0a63b0" />
            </Svg>
          }
        />
        <Tall
          className="ml-[2px] w-[58px]"
          a="Format" aw="w-[38px]" b="as Table" bw="w-[45px]"
          icon={
            <Svg w={31} h={30} className="ml-[3px]">
              <path d="M.6 27.500V.6h26.800V14M.6 27.500H13" fill="none" stroke="#333" strokeWidth="1.300" />
              <rect x="1" y="1" width="26" height="4" fill="#c8c6c4" stroke="#333" /><path d="M1 12h26M1 19.500h12M9.500 5v22M18.500 5v8" stroke="#777" />
              <path d="m14 21 3-7 3 7M15 19h4" stroke="#1e8bcd" strokeWidth="1.400" /><path d="M14.500 23.500h5L14.500 29h5.500" stroke="#333" strokeWidth="1.200" />
              <path d="M21.500 18h8L27 22v4.500h-2.500V22Z" fill="#fff" stroke="#333" strokeWidth="1.200" />
            </Svg>
          }
        />
      </Group>

      <Group label="Cells" labelW="w-[20px]" className="w-[137px]">
        <Tall
          className="ml-[5px] w-[42px]" a="Insert" aw="w-[32px]"
          icon={
            <Svg w={28} h={22}>
              <GridBase />
              <rect x="11" y="7.500" width="19" height="7" fill="#83beec" stroke="#0a63b0" strokeWidth="1.300" /><path d="M20.500 7.500v7" stroke="#0a63b0" />
              <path d="M12 8.500H0v5h12" fill="#fff" stroke="#fff" strokeWidth="2" /><path d="M12 9.500H1M12 12.500H1M5.500 5.500-1 11l6.500 5.500" stroke="#1e8bcd" strokeWidth="1.400" />
            </Svg>
          }
        />
        <Tall
          className="w-[42px]" a="Delete" aw="w-[36px]"
          icon={
            <Svg w={28} h={22}>
              <GridBase />
              <path d="M0 8h4v6H0Z" fill="#fff" /><path d="M4.500 7.500h12l3 3.500-3 3.500h-12ZM13.500 7.500v7" fill="#83beec" stroke="#0a63b0" strokeWidth="1.200" />
              <path d="M18 6h11v11H18Z" fill="#fff" opacity=".8" /><path d="m18 6 11 11M29 6 18 17" stroke="#ee3d3d" strokeWidth="1.500" />
            </Svg>
          }
        />
        <Tall
          className="w-[43px]" a="Format" aw="w-[38px]"
          icon={
            <Svg w={28} h={22}>
              <GridBase />
              <rect x="7.500" y="7.500" width="13" height="7" fill="#83beec" stroke="#0a63b0" strokeWidth="1.300" />
              <path d="M7 -3.500h15M7 -5.500v4M22 -5.500v4" stroke="#1e8bcd" strokeWidth="1.200" />
            </Svg>
          }
        />
      </Group>

      <Group label="Editing" labelW="w-[30px]" className="w-[194px]">
        <div className="ml-[10px] flex flex-col pt-[9px]">
          <div className="flex h-[22px] items-center">
            <Svg w={13} h={14} className="mt-px ml-px"><path d="M12 3V.7H1L7 7l-6 6.300h11V11" stroke="#333" strokeWidth="1.400" /></Svg>
            <T className="ml-[4px] w-[48px]">AutoSum</T>
            <Caret className="ml-[6px]" />
          </div>
          <div className="mt-[8px] flex h-[22px] items-center">
            <Svg w={15} h={15} className="mt-[2px]"><path d="M1 9.500 9.500 .8l4.700 4.700L5.700 14.200Z" fill="#fff" stroke="#9b3fa8" strokeWidth="1.300" /><path d="m1 9.500 3-3 4.700 4.700-3 3Z" fill="#d993e0" stroke="#9b3fa8" /></Svg>
            <T className="ml-[4px] w-[27px]">Clear</T>
            <Caret className="ml-[4px]" />
          </div>
        </div>
        <Tall
          className="ml-[10px] w-[40px]" a="Sort &" aw="w-[32px]" b="Filter" bw="w-[28px]"
          icon={
            <Svg w={28} h={27}>
              <path d="M.7 12 5 1l4.300 11M2.200 8.500h5.600" stroke="#1e8bcd" strokeWidth="1.500" /><path d="M1 15.500h7.500L1 25.500h8" stroke="#333" strokeWidth="1.500" />
              <path d="M13 6.500h14.500L22 13v8.500h-3.500V13Z" fill="#fafafa" stroke="#333" strokeWidth="1.300" />
            </Svg>
          }
        />
        <Tall
          className="ml-[3px] w-[44px]" a="Find &" aw="w-[34px]" b="Select" bw="w-[33px]"
          icon={<Svg w={29} h={29}><circle cx="18.500" cy="10.500" r="9.900" fill="#fafafa" stroke="#333" strokeWidth="1.200" /><path d="M11.500 17.500.5 28.500" stroke="#333" strokeWidth="1.400" /></Svg>}
        />
      </Group>
      <Svg w={9} h={6} className="mr-[8px] mb-[9px] ml-auto self-end"><path d="m.7 5.300 3.800-4 3.800 4" stroke="#333" strokeWidth="1.600" /></Svg>
    </div>
  );
}

function FormulaBar() {
  return (
    <div className="flex h-[37px] items-start bg-[#ebeae9] pt-[5px] pl-[5px] font-['Lato'] text-[#333]">
      <span className="flex h-[23px] w-[120px] items-center bg-white pr-[3px] pl-[2px] text-[13px]"><T className="w-[22px]">P27</T><Caret className="ml-auto" /></span>
      <span className="ml-[5px] flex h-[23px] w-[29px] items-center justify-center bg-white font-['Liberation_Serif'] text-[15px] leading-none font-bold italic">f<span className="text-[11px]">x</span></span>
      <span className="ml-[5px] h-[23px] w-[1684px] bg-white" />
    </div>
  );
}

const columns = [
  { n: "A", w: "w-[64px]" }, { n: "B", w: "w-[64px]" }, { n: "C", w: "w-[81px]" }, { n: "D", w: "w-[64px]" },
  { n: "E", w: "w-[115px]" }, { n: "F", w: "w-[684px]" },
  ...["G", "H", "I", "J", "K", "L", "M", "N", "O", "P", "Q"].map((n) => ({ n, w: "w-[64px]" })),
];

type Line = [string, string];
const rows: { n: number; h: string; full: string; day: string; date: string; dayW: string; lines: Line[] }[] = [
  {
    n: 25, h: "h-[76px]", full: "h-[86px]", day: "Sat", dayW: "w-[26px]", date: "23-Mar",
    lines: [
      ["yaxin and klaudia started work on adding save function, ageed to continue working", "w-[680px]"],
      ["on it next couple of days, Gloria discovered a problem with the sign up view, will", "w-[661px]"],
      ["work towards fixing it", "w-[177px]"],
    ],
  },
  {
    n: 26, h: "h-[196px]", full: "h-[196px]", day: "Sun", dayW: "w-[31px]", date: "24-Mar",
    lines: [
      ["first attempt at adding the save function, not quite successful, Yaxin, Daisy and", "w-[642px]"],
      ["Klaudia will continue work on it (also will go to get help tommorow as this is taking", "w-[675px]"],
      ["a long time), Gloria fixed the problem with sign up view, Gloria said she will", "w-[612px]"],
      ["attempt adding the bank holidays function tommorow, Faith said she'll start", "w-[618px]"],
      ["working on admin main page tommorow, Daisy proposed a design change to the", "w-[658px]"],
      ["views, everyone pre-viewed and approved, Daisy will add it tommorow", "w-[586px]"],
    ],
  },
  {
    n: 27, h: "h-[196px]", full: "h-[196px]", day: "Mon", dayW: "w-[39px]", date: "25-Mar",
    lines: [
      ["Daisy, Yaxin and Klaudia went to get help with save function, was advised to", "w-[652px]"],
      ["change approach (don't use ajax/JSON - try solving issue with standard jquery and", "w-[669px]"],
      ["js) - they'll continue working on that, Gloria attempted to add the bank holidays", "w-[652px]"],
      ["function, however it cannot be used right now because of time tracking issues in", "w-[661px]"],
      ["the overall app also fixed a bug in line manager page, Faith finished the main", "w-[643px]"],
      ["admin page and all its corresponding success pages, Daisy changed the design as", "w-[658px]"],
      ["approved yesterday with no issues", "w-[284px]"],
    ],
  },
  {
    n: 28, h: "h-[192px]", full: "h-[196px]", day: "Tue", dayW: "w-[29px]", date: "26-Mar",
    lines: [
      ["Gloria tried to add a controller for line manager page, the build failed on travis,", "w-[645px]"],
      ["Faith and Gloria worked to fix it, (turned out to be a checkstyle error that didn't", "w-[646px]"],
      ["appear when run in the terminal), Faith fixed some bugs with the main adimn", "w-[634px]"],
      ["page, Daisy imroved some design and attempted to add a settings function.", "w-[619px]"],
      ["Tomorrow we will: continue trying to add save function, do manual and integration", "w-[679px]"],
      ["test for all finished stories and fix all minor bugs found in testing", "w-[524px]"],
    ],
  },
];

function Sheet() {
  return (
    <div className="relative bg-white">
      <div className="flex h-[19px] items-start bg-[#ebeae9] font-['Liberation_Sans'] text-[14px] text-[#666]">
        <span className="flex h-[16px] w-[37px] justify-end border-r border-[#d8d6d4] pr-[2px]"><Svg w={15} h={16}><path d="M15 0v16H0Z" fill="#b5b3b2" /></Svg></span>
        {columns.map((c) => (
          <span
            key={c.n}
            className={clsx(
              "flex shrink-0 items-center justify-center border-r leading-none",
              c.w,
              c.n === "P" ? "h-[19px] border-b-2 border-r-[#bbb] border-b-[#217346] bg-[#d9d8d7] pb-[2px] font-bold text-[#217346]" : "h-[16px] border-[#d8d6d4]",
            )}
          >
            {c.n}
          </span>
        ))}
        <span className="ml-[26px] flex h-[16px] w-[3px] items-center overflow-hidden leading-none">I</span>
      </div>
      <div className="flex flex-col text-black">
        {rows.map((r) => (
          <div key={r.n} className={clsx("flex overflow-hidden", r.h, r.n === 28 ? "items-start" : "items-end")}>
            <div
              className={clsx(
                "flex w-[37px] shrink-0 items-end justify-center border-b pb-px font-['Liberation_Sans'] text-[14px] leading-[14px]",
                r.full,
                r.n === 27 ? "border-r-2 border-r-[#217346] border-b-[#bbb] bg-[#dbdad9] font-bold text-[#217346]" : "border-r border-r-[#b5b3b2] border-b-[#d8d6d4] bg-[#ebeae9] text-[#666]",
              )}
            >
              {r.n}
            </div>
            {columns.map((c) => (
              <div
                key={c.n}
                className={clsx(
                  "flex shrink-0 flex-col border-r border-[#d4d4d4] px-[2px] font-['Lato'] text-[18px] leading-[26px]",
                  c.w,
                  r.full,
                  c.n !== "A" && "border-b",
                  c.n === "B" || c.n === "C" ? "justify-center pb-[4px]" : "justify-end",
                  c.n === "C" && "items-end",
                )}
              >
                {c.n === "B" && <T className={r.dayW}>{r.day}</T>}
                {c.n === "C" && <T className="w-[62px]">{r.date}</T>}
                {c.n === "D" && <T className="mb-[2px] ml-px w-[47px]">10pm</T>}
                {c.n === "E" && <T className="mb-[2px] w-[72px]">small lab</T>}
                {c.n === "F" && (
                  <div className="mb-[2px] flex flex-col">
                    {r.lines.map(([text, w]) => <T key={text} className={w}>{text}</T>)}
                  </div>
                )}
              </div>
            ))}
            <div className={clsx("w-[28px] shrink-0 border-b border-[#d4d4d4]", r.full)} />
          </div>
        ))}
      </div>
      <div className="flex h-[12px]">
        <span className="w-[37px] bg-[#ebeae9]" />
        <span className="mt-[7px] h-[5px] w-[482px] rounded-[1px] bg-[#f4926f]" />
        <span className="ml-auto w-[12px] bg-[#f3f2f1]" />
      </div>
      <div className="absolute top-[289px] left-[1683px] h-[199px] w-[67px] border-2 border-[#217346]">
        <i className="absolute right-[-4px] bottom-[-4px] size-[6px] border border-white bg-[#217346]" />
      </div>
      <i className="absolute top-[251px] right-0 h-[220px] w-[5px] rounded-[1px] bg-[#f4926f]" />
    </div>
  );
}

function SheetTabs() {
  return (
    <div className="flex h-[28px] items-start border-b border-[#dedcda] bg-[#f3f2f1] pt-[2px] font-['Liberation_Sans'] text-[14px] leading-none text-[#444]">
      <div className="flex h-[22px] w-[136px] items-center pl-[10px]">
        <Svg w={7} h={8}><path d="M.7 0v8M7 0v8L2.500 4Z" fill="#c4c2c0" stroke="#c4c2c0" strokeWidth=".8" /></Svg>
        <Svg w={5} h={8} className="ml-[20px]"><path d="M5 0v8L0 4Z" fill="#c4c2c0" /></Svg>
        <Svg w={5} h={8} className="ml-[23px]"><path d="M0 0v8l5-4Z" fill="#c4c2c0" /></Svg>
        <Svg w={7} h={8} className="ml-[21px]"><path d="M6.300 0v8M0 0v8l4.500-4Z" fill="#c4c2c0" stroke="#c4c2c0" strokeWidth=".8" /></Svg>
      </div>
      <span className="flex h-[22px] w-[62px] justify-center border-l border-[#aaa] pt-px"><T className="w-[21px]">Jan</T></span>
      <span className="flex h-[22px] w-[63px] justify-center border-l border-[#aaa] pt-px"><T className="w-[22px]">Feb</T></span>
      <span className="mt-[-2px] flex h-[24px] w-[79px] justify-center border-x border-b-2 border-x-[#aaa] border-b-[#217346] bg-white pt-[3px] font-bold text-[#217346]"><T className="w-[38px]">March</T></span>
      <Svg w={16} h={16} className="mt-[3px] ml-[40px]"><circle cx="8" cy="8" r="7.400" fill="#fff" stroke="#777" strokeWidth="1.200" /><path d="M8 4v8M4 8h8" stroke="#777" strokeWidth="2" /></Svg>
    </div>
  );
}

export default function App() {
  return (
    <div className="flex h-[1080px] w-[1920px] flex-col overflow-hidden bg-white">
      <TopBar />
      <div className="flex">
        <Dock />
        <main className="flex w-[1853px] flex-col">
          <BrowserChrome />
          <SuiteHeader />
          <RibbonTabs />
          <Ribbon />
          <FormulaBar />
          <Sheet />
          <SheetTabs />
          <footer className="flex h-[22px] items-center bg-white font-['Lato'] text-[12px] text-[#333]">
            <Caret className="ml-[1689px]" />
            <T className="ml-[42px] w-[105px]">Help Improve Office</T>
          </footer>
        </main>
      </div>
    </div>
  );
}
